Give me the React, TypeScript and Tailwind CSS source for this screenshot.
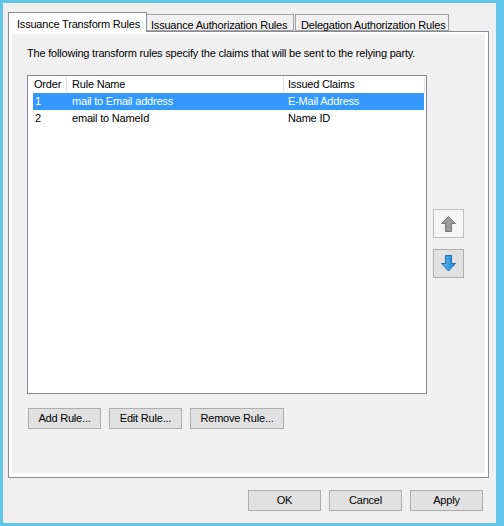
import React from 'react';

const rules = [
  { order: '1', name: 'mail to Email address', claims: 'E-Mail Address', selected: true },
  { order: '2', name: 'email to NameId', claims: 'Name ID', selected: false },
];

const ArrowUp: React.FC = () => (
  <svg width="15" height="16" viewBox="0 0 15 16">
    <path d="M7.5 0.5 L14.5 7.5 L10.5 7.5 L10.5 15.5 L4.5 15.5 L4.5 7.5 L0.5 7.5 Z" fill="#9a9a9a" stroke="#7a7a7a" strokeWidth="1" />
  </svg>
);

const ArrowDown: React.FC = () => (
  <svg width="15" height="17" viewBox="0 0 15 17">
    <defs>
      <linearGradient id="blueArrow" x1="0" y1="0" x2="1" y2="0">
        <stop offset="0" stopColor="#5fb8f2" />
        <stop offset="1" stopColor="#1f84d8" />
      </linearGradient>
    </defs>
    <path d="M4.5 0.5 L10.5 0.5 L10.5 8.5 L14.5 8.5 L7.5 16 L0.5 8.5 L4.5 8.5 Z" fill="url(#blueArrow)" stroke="#1a6fb8" strokeWidth="1" />
  </svg>
);

const Button: React.FC<{ label: string; width: string }> = ({ label, width }) => (
  <button className={`${width} h-[21px] bg-[#e1e1e1] border border-[#adadad] text-black text-[11px] leading-none flex items-center justify-center whitespace-nowrap`}>
    {label}
  </button>
);

export default function App() {
  return (
    <div
      className="w-[504px] h-[526px] bg-[#f0f0f0] border-t-[3px] border-l-[3px] border-r-[8px] border-b-[3px] border-[#62c6e9] flex flex-col text-[11px] tracking-[-0.2px] text-black"
      style={{ fontFamily: '"Liberation Sans", Arial, sans-serif' }}
    >
      <div className="pt-[9px] pl-[5px] pr-[7px]">
        {/* tab strip */}
        <div className="flex items-end h-[19px] whitespace-nowrap">
          <div className="w-[139px] h-[20px] bg-white border border-b-0 border-[#898c95] pl-[8px] pt-[3px] relative z-10 -mb-px">
            Issuance Transform Rules
          </div>
          <div className="w-[147px] h-[17px] bg-[#f0f0f0] border border-l-0 border-[#a0a0a0] pl-[4px] pt-[2px]">
            Issuance Authorization Rules
          </div>
          <div className="ml-[1px] w-[154px] h-[17px] bg-[#f0f0f0] border border-[#a0a0a0] pl-[5px] pt-[2px]">
            Delegation Authorization Rules
          </div>
        </div>
        {/* panel */}
        <div className="w-[481px] h-[447px] border border-[#898c95] bg-white pt-[2px] px-[3px] pb-[4px]">
          <div className="h-full bg-[#f0f0f0] pl-[15px] pt-[13px]">
            <p className="leading-[13px] whitespace-nowrap">The following transform rules specify the claims that will be sent to the relying party.</p>
            <div className="flex mt-[15px]">
              <div className="w-[400px] h-[319px] bg-white border border-[#828790]">
                <div className="flex h-[17px] items-center">
                  <div className="w-[39px] h-full border-r border-[#e5e5e5] pl-[6px] leading-[17px]">Order</div>
                  <div className="w-[217px] h-full border-r border-[#e5e5e5] pl-[5px] leading-[17px]">Rule Name</div>
                  <div className="w-[141px] h-full border-r border-[#e5e5e5] pl-[4px] leading-[17px]">Issued Claims</div>
                </div>
                {rules.map((r) => (
                  <div
                    key={r.order}
                    className={`flex h-[17px] ml-[5px] w-[391px] leading-[17px] ${r.selected ? 'bg-[#3399ff] text-white' : ''}`}
                  >
                    <div className="w-[35px] pl-[2px]">{r.order}</div>
                    <div className="w-[216px] pl-[4px]">{r.name}</div>
                    <div className="pl-[4px]">{r.claims}</div>
                  </div>
                ))}
              </div>
              <div className="flex flex-col ml-[6px] pt-[134px] gap-[11px]">
                <button className="w-[31px] h-[29px] bg-[#f4f4f4] border border-[#bfbfbf] flex items-center justify-center">
                  <ArrowUp />
                </button>
                <button className="w-[31px] h-[29px] bg-[#e1e1e1] border border-[#adadad] flex items-center justify-center">
                  <ArrowDown />
                </button>
              </div>
            </div>
            <div className="flex gap-[8px] mt-[14px] pl-[1px]">
              <Button label="Add Rule..." width="w-[73px]" />
              <Button label="Edit Rule..." width="w-[73px]" />
              <Button label="Remove Rule..." width="w-[94px]" />
            </div>
          </div>
        </div>
      </div>
      <div className="flex justify-end gap-[8px] mt-[12px] pr-[13px]">
        <Button label="OK" width="w-[73px]" />
        <Button label="Cancel" width="w-[73px]" />
        <Button label="Apply" width="w-[73px]" />
      </div>
    </div>
  );
}
